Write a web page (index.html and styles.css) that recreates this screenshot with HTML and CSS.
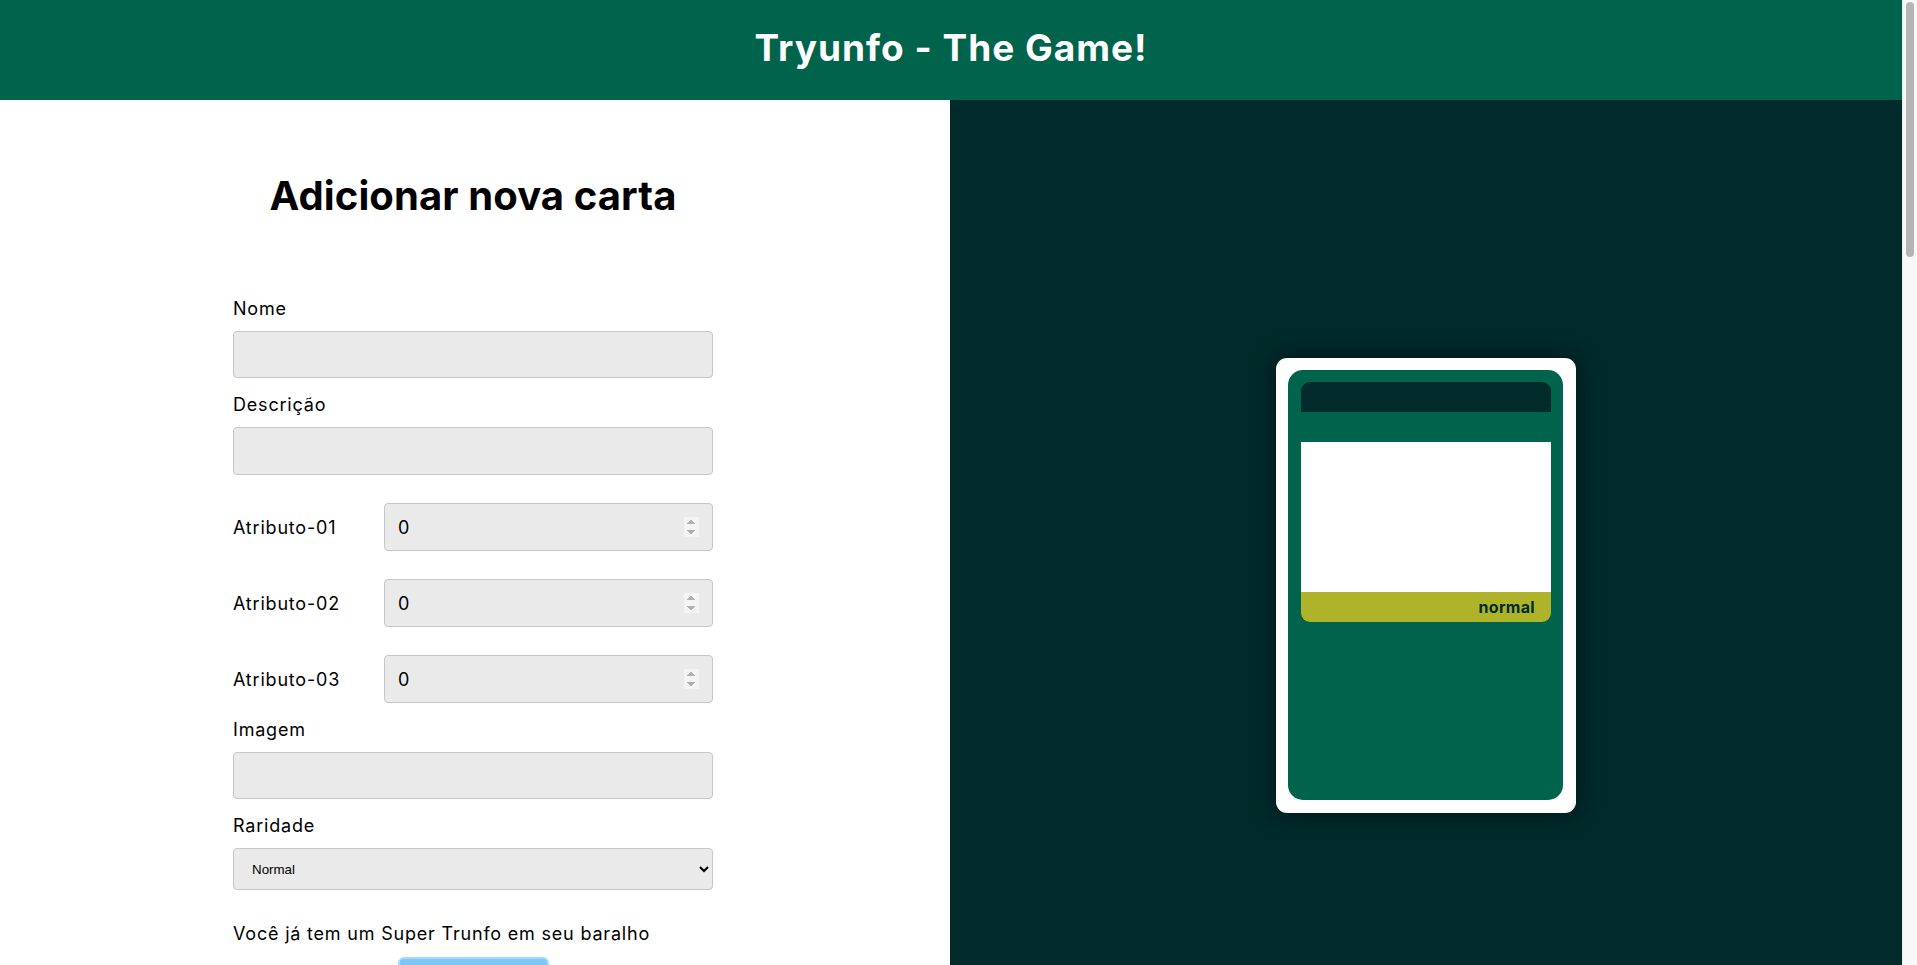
FILE: index.html
```html
<!DOCTYPE html>
<html lang="pt-BR">
<head>
<meta charset="utf-8">
<title>Tryunfo</title>
<link rel="stylesheet" href="styles.css">
</head>
<body>
<div class="page">
  <header class="topbar">
    <h1 class="brand">Tryunfo - The Game!</h1>
  </header>
  <main class="workspace">
    <section class="editor">
      <h2 class="editor-title">Adicionar nova carta</h2>
      <form class="card-form">
        <div class="field">
          <label class="field-label" for="name">Nome</label>
          <input class="text-input" id="name" type="text">
        </div>
        <div class="field">
          <label class="field-label" for="desc">Descrição</label>
          <input class="text-input tall" id="desc" type="text">
        </div>
        <div class="attrs">
          <div class="attr-row">
            <label class="field-label attr-label" for="a1">Atributo-01</label>
            <input class="num-input" id="a1" type="number" value="0">
          </div>
          <div class="attr-row">
            <label class="field-label attr-label" for="a2">Atributo-02</label>
            <input class="num-input" id="a2" type="number" value="0">
          </div>
          <div class="attr-row">
            <label class="field-label attr-label" for="a3">Atributo-03</label>
            <input class="num-input" id="a3" type="number" value="0">
          </div>
        </div>
        <div class="field">
          <label class="field-label" for="img">Imagem</label>
          <input class="text-input" id="img" type="text">
        </div>
        <div class="field">
          <label class="field-label" for="rare">Raridade</label>
          <select class="select-input" id="rare">
            <option>Normal</option>
            <option>Raro</option>
            <option>Muito raro</option>
          </select>
        </div>
        <div class="field trunfo">
          <p class="field-label">Você já tem um Super Trunfo em seu baralho</p>
          <button class="save-btn" type="button" disabled>Salvar</button>
        </div>
      </form>
    </section>
    <section class="preview">
      <div class="card">
        <div class="card-inner">
          <div class="card-name"></div>
          <div class="card-gap"></div>
          <div class="card-image"></div>
          <div class="card-rarity">normal</div>
        </div>
      </div>
    </section>
  </main>
  <section class="deck"></section>
</div>
<div class="scrollbar"><div class="scroll-thumb"></div></div>
</body>
</html>
```

FILE: styles.css
```css
* { box-sizing: border-box; }

body {
  margin: 0;
  font-family: Inter, "Noto Sans", "Liberation Sans", sans-serif;
  color: #000;
  background: #fff;
}

.page {
  margin-right: 15px;
}

.scrollbar {
  position: fixed;
  top: 0;
  right: 0;
  width: 15px;
  height: 100vh;
  background: #f8f8f8;
  border-left: 1px solid #ececec;
  padding: 2px 3px 0 3px;
}

.scroll-thumb {
  width: 8px;
  height: 255px;
  background: #b5b5b5;
  border-radius: 4px;
}

.topbar {
  height: 100px;
  background: #00634c;
  display: flex;
  align-items: center;
  justify-content: center;
  padding-bottom: 3px;
}

.brand {
  margin: 0;
  color: #fff;
  font-size: 37px;
  font-weight: 700;
  letter-spacing: 1px;
  line-height: 1.2;
}

.workspace {
  display: flex;
}

.editor {
  width: 950px;
  flex: none;
  padding: 72px 237px 60px 233px;
  background: #fff;
}

.editor-title {
  margin: 0 0 76px;
  text-align: center;
  font-size: 40px;
  line-height: 48px;
  font-weight: 700;
  letter-spacing: 0.1px;
}

.card-form {
  display: flex;
  flex-direction: column;
}

.field {
  display: flex;
  flex-direction: column;
  gap: 11px;
  margin-bottom: 14px;
}

.field-label {
  margin: 0;
  padding-top: 2px;
  font-size: 18px;
  line-height: 22px;
  font-weight: 400;
  letter-spacing: 0.8px;
}

.text-input,
.num-input,
.select-input {
  width: 100%;
  height: 47px;
  margin: 0;
  background: #eaeaea;
  border: 1px solid #c6c6c6;
  border-radius: 4px;
  font-family: inherit;
  font-size: 18px;
  padding: 0 13px;
  color: #000;
}

.text-input.tall { height: 48px; }

.attrs {
  display: flex;
  flex-direction: column;
  gap: 28px;
  margin: 14px 0 14px;
}

.attr-row {
  display: flex;
  align-items: center;
}

.attr-label {
  width: 151px;
  flex: none;
}

.num-input {
  flex: 1;
  height: 48px;
  padding: 1px 13px 0 13px;
}

.num-input::-webkit-inner-spin-button {
  opacity: 0.6;
}

.select-input {
  height: 42px;
  padding: 0 14px;
  font-family: "Liberation Sans", Arial, sans-serif;
  font-size: 13.33px;
}

.trunfo {
  margin-top: 17px;
  gap: 12px;
}

.save-btn {
  align-self: center;
  width: 151px;
  height: 40px;
  background: #7cc7f6;
  border: 2px solid #a8d9fb;
  border-radius: 6px;
  font-family: inherit;
  font-size: 16px;
  color: #fff;
}

.preview {
  flex: 1;
  background: #012a2b;
  display: flex;
  align-items: center;
  justify-content: center;
}

.card {
  width: 300px;
  height: 455px;
  background: #fff;
  border-radius: 11px;
  padding: 12px 13px 13px 12px;
  box-shadow: 0 0 22px rgba(0, 0, 0, 0.55);
}

.card-inner {
  height: 100%;
  background: #00634c;
  border-radius: 15px;
  padding: 12px 12px 0 13px;
  display: flex;
  flex-direction: column;
}

.card-name {
  height: 30px;
  background: #012a2b;
  border-radius: 9px 9px 0 0;
}

.card-gap {
  height: 30px;
}

.card-image {
  height: 150px;
  background: #fff;
}

.card-rarity {
  height: 30px;
  background: #afb32a;
  border-radius: 0 0 9px 9px;
  color: #012a2b;
  font-weight: 700;
  font-size: 16px;
  line-height: 30px;
  text-align: right;
  padding-right: 16px;
  letter-spacing: 0.3px;
}

.deck {
  height: 2580px;
  background: #fff;
}
```
